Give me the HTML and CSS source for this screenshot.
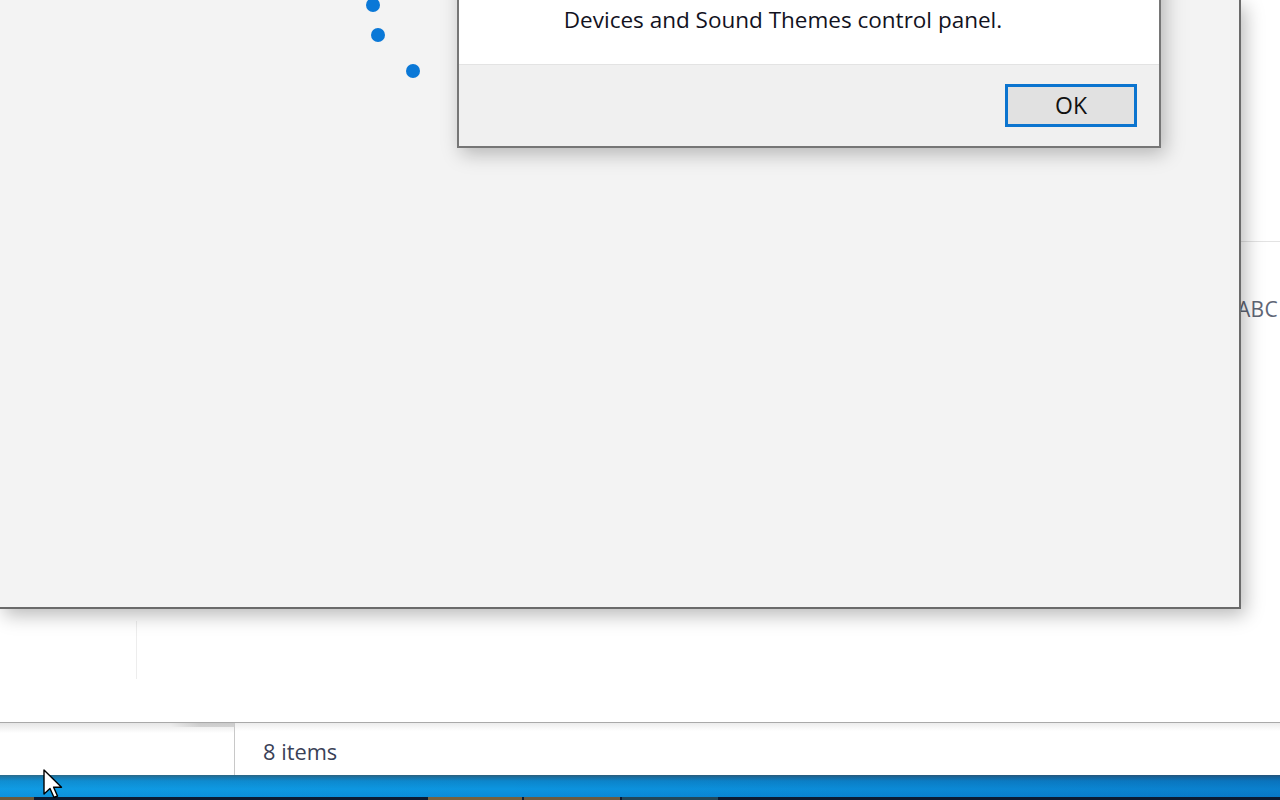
FILE: index.html
```html
<!DOCTYPE html>
<html>
<head>
<meta charset="utf-8">
<link rel="stylesheet" href="styles.css">
</head>
<body>
<div class="desktop">
  <div class="explorer">
    <div class="explorer-right">
      <div class="er-line"></div>
      <div class="er-text">ABC</div>
    </div>
    <div class="explorer-lower">
      <div class="col-divider"></div>
    </div>
    <div class="statusbar">
      <div class="sb-left"></div>
      <div class="sb-count">8 items</div>
    </div>
  </div>

  <div class="mainwin">
    <span class="dot d1"></span>
    <span class="dot d2"></span>
    <span class="dot d3"></span>
  </div>

  <div class="dialog">
    <div class="dlg-body">
      <p class="dlg-text">Devices and Sound Themes control panel.</p>
    </div>
    <div class="dlg-footer">
      <button class="ok">OK</button>
    </div>
  </div>

  <div class="taskbar">
    <div class="tb-shade"></div>
    <div class="tb-strip">
      <span class="seg s1"></span>
      <span class="seg s2"></span>
      <span class="seg s3"></span>
      <span class="seg s4"></span>
    </div>
  </div>

  <svg class="cursor" width="22" height="32" viewBox="0 0 22 32">
    <path d="M1 1 L1 25 L7 19.5 L11 28.5 L14.5 27 L10.6 18.2 L18.5 18.2 Z" fill="#fff" stroke="#000" stroke-width="1.4" stroke-linejoin="round"/>
  </svg>
</div>
</body>
</html>
```
FILE: styles.css
```css
html, body {
  margin: 0;
  padding: 0;
  width: 1280px;
  height: 800px;
  overflow: hidden;
  font-family: "Open Sans", "Noto Sans", sans-serif;
}
.desktop {
  position: relative;
  width: 1280px;
  height: 800px;
  background: #fff;
}
.explorer {
  position: absolute;
  left: 0; top: 0;
  width: 1280px;
  height: 775px;
  background: #fff;
}
.explorer-right {
  position: absolute;
  left: 1200px;
  top: 0;
  width: 80px;
  height: 608px;
}
.er-line {
  position: absolute;
  left: 0; right: 0;
  top: 241px;
  height: 1px;
  background: #e3e3e3;
}
.er-text {
  position: absolute;
  left: 37px;
  top: 295px;
  font-size: 21px;
  color: #5f6675;
  letter-spacing: 0.3px;
}
.explorer-lower {
  position: absolute;
  left: 0; top: 609px;
  width: 1280px;
  height: 113px;
}
.col-divider {
  position: absolute;
  left: 136px;
  top: 12px;
  width: 1px;
  height: 58px;
  background: #ededed;
}
.statusbar {
  position: absolute;
  left: 0; top: 722px;
  width: 1280px;
  height: 53px;
  border-top: 1px solid #a9a9a9;
  box-sizing: border-box;
  display: flex;
  align-items: center;
  background: linear-gradient(#ececec, #fff 8px);
}
.sb-left {
  width: 235px;
  height: 100%;
  border-right: 1px solid #c8c8c8;
  box-sizing: border-box;
  background:
    linear-gradient(90deg, rgba(255,255,255,0) 170px, rgba(0,0,0,0.12) 200px, rgba(0,0,0,0.12) 234px) top / 100% 4px no-repeat,
    linear-gradient(#e6e6e6, #fff 10px);
}
.sb-count {
  padding-left: 28px;
  padding-top: 4px;
  font-size: 21.8px;
  color: #3a4157;
}
.mainwin {
  position: absolute;
  left: 0; top: 0;
  width: 1239px;
  height: 607px;
  background: #f3f3f3;
  border-right: 2px solid #6a6a6a;
  border-bottom: 2px solid #6a6a6a;
  box-shadow: 4px 6px 18px rgba(0,0,0,0.28);
}
.dot {
  position: absolute;
  width: 14px;
  height: 14px;
  border-radius: 50%;
  background: #0a78d7;
}
.d1 { left: 366px; top: -2px; }
.d2 { left: 371px; top: 28px; }
.d3 { left: 406px; top: 64px; }
.dialog {
  position: absolute;
  left: 457px;
  top: -40px;
  width: 700px;
  height: 186px;
  border: 1px solid #767676;
  border-width: 0 2px 2px 2px;
  background: #fff;
  box-shadow: 4px 6px 18px rgba(0,0,0,0.25);
  display: flex;
  flex-direction: column;
}
.dlg-body {
  height: 105px;
  background: #fff;
  border-bottom: 1px solid #e3e3e3;
  box-sizing: border-box;
  display: flex;
  justify-content: center;
}
.dlg-text {
  margin: 0;
  font-size: 22.5px;
  line-height: 33px;
  color: #12121e;
  text-align: center;
  position: relative;
  left: -26px;
  top: 43px;
  white-space: nowrap;
}
.dlg-footer {
  flex: 1;
  background: #f0f0f0;
  display: flex;
  justify-content: flex-end;
  align-items: center;
  padding-right: 22px;
}
.ok {
  width: 132px;
  height: 43px;
  margin-bottom: 1px;
  border: 3px solid #0b74cf;
  background: #e1e1e1;
  font-family: "Open Sans", "Noto Sans", sans-serif;
  font-size: 23px;
  color: #111;
  padding: 0;
}
.taskbar {
  position: absolute;
  left: 0; top: 775px;
  width: 1280px;
  height: 25px;
  background: linear-gradient(#2f5e78 0px, #1a6e9e 2px, #0c86cc 6px, #0c95e0 14px, #0a8cd9 21px);
}
.tb-shade {
  position: absolute;
  inset: 0;
  background: linear-gradient(90deg, rgba(40,200,255,0.12) 0px, rgba(0,0,0,0) 500px, rgba(0,30,120,0.18) 1280px);
}
.tb-strip {
  position: absolute;
  left: 0; bottom: 0;
  width: 1280px;
  height: 3px;
  background: #0b1b33;
}
.seg { position: absolute; top: 0; height: 3px; }
.s1 { left: 0; width: 34px; background: #6b5a3c; }
.s2 { left: 428px; width: 94px; background: #75613f; }
.s3 { left: 524px; width: 96px; background: #6a5a40; }
.s4 { left: 622px; width: 96px; background: #21475a; }
.cursor {
  position: absolute;
  left: 43px;
  top: 769px;
}
```
